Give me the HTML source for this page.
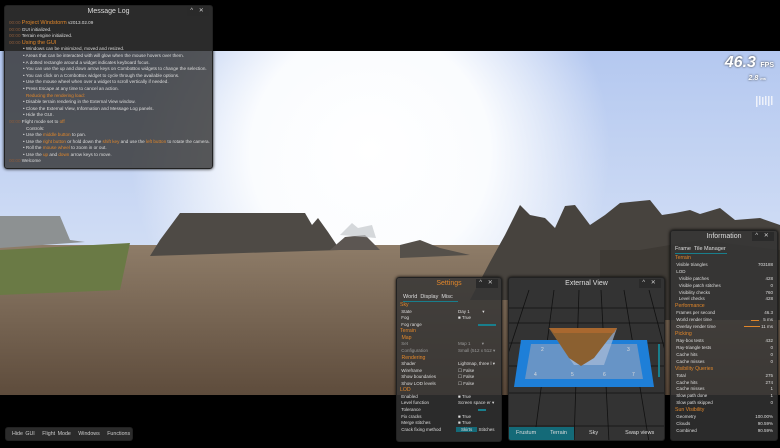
<!DOCTYPE html>
<html><head><meta charset="utf-8"><style>
*{margin:0;padding:0;box-sizing:border-box}
body{width:780px;height:448px;background:#000;overflow:hidden;position:relative;font-family:"Liberation Sans",sans-serif;color:#ddd}
.p{position:absolute;background:rgba(52,52,52,.82);border:1px solid #222;border-radius:3px;box-shadow:0 0 3px #000}
.t{text-align:center;font-size:7px;color:#ddd;height:12px;line-height:12px}
.ctl{position:absolute;right:3px;top:1px;width:22px;height:9px;background:#2a2a2a;font-size:6px;color:#ccc;text-align:center;line-height:9px;letter-spacing:2px}
.o{color:#e0862a}
.ml{font-size:4.6px;line-height:6.6px;white-space:nowrap;padding-left:4px}
.ts{color:#8a5a3a}
.r{display:flex;justify-content:space-between;font-size:4.5px;line-height:6.55px;white-space:nowrap}
.h{font-size:5.2px;color:#e0862a;line-height:6.6px}
.inf .r{line-height:6.85px}
.inf .h{line-height:7.2px}
</style></head><body>
<svg width="780" height="448" style="position:absolute;left:0;top:0">
<defs>
<linearGradient id="sky" x1="0" y1="0" x2="0" y2="1"><stop offset="0" stop-color="#b4c8f0"/><stop offset="1" stop-color="#e6edf8"/></linearGradient>
<radialGradient id="sun" cx="370" cy="150" r="240" gradientUnits="userSpaceOnUse"><stop offset="0" stop-color="#fff"/><stop offset=".5" stop-color="#fdfeff" stop-opacity=".95"/><stop offset="1" stop-color="#fff" stop-opacity="0"/></radialGradient>
<linearGradient id="gr" x1="0" y1="0" x2="0" y2="1"><stop offset="0" stop-color="#8e7c68"/><stop offset="1" stop-color="#5e4c3c"/></linearGradient>
</defs>
<rect x="0" y="51" width="780" height="344" fill="url(#sky)"/>
<rect x="0" y="51" width="780" height="344" fill="url(#sun)"/>
<rect x="0" y="245" width="780" height="150" fill="url(#gr)"/>
<path d="M0 216 L60 216 L70 240 L85 242 L0 248Z" fill="#8d9192"/>
<path d="M0 250 L130 243 L120 290 L0 295Z" fill="#6a7a45"/>
<path d="M160 240 L180 213 L305 213 L312 225 L318 218 L328 232 L340 250 L150 256Z" fill="#4e4a45"/>
<path d="M330 250 L345 237 L365 235 L380 250Z" fill="#5c5652"/>
<path d="M340 235 L352 223 L358 228 L372 225 L376 238Z" fill="#c4c8cc" opacity=".7"/>
<path d="M470 300 L490 262 L505 235 L520 205 L530 215 L545 218 L555 228 L565 206 L575 205 L590 225 L605 215 L620 203 L650 200 L662 215 L675 213 L690 210 L700 214 L720 208 L735 220 L760 218 L780 225 L780 300Z" fill="#47433e"/>
<path d="M600 250 L640 250 L700 240 L780 250 L780 320 L600 320Z" fill="#3e3a35"/>
<path d="M400 245 L420 240 L440 248 L470 255 L400 258Z" fill="#55504a"/>
<rect x="0" y="395" width="780" height="53" fill="#000"/>
<g fill="#f4f6fb" opacity=".9"><rect x="756" y="96" width="1.5" height="11"/><rect x="759" y="96" width="1.5" height="9"/><rect x="762" y="97" width="1.5" height="8"/><rect x="765" y="96" width="1.5" height="9"/><rect x="768" y="96" width="1.5" height="10"/><rect x="771" y="96" width="1.5" height="9"/></g>
</svg>
<div style="position:absolute;right:6px;top:54px;font-size:16px;font-weight:bold;font-style:italic;color:#fff;text-shadow:0 0 2px #333">46.3 <span style="font-size:7px;font-style:normal">FPS</span></div>
<div style="position:absolute;right:14px;top:75px;font-size:7px;font-weight:bold;font-style:italic;color:#fff;text-shadow:0 0 2px #333">2.8 <span style="font-size:4px">ms</span></div>

<div class="p" style="left:4px;top:5px;width:209px;height:164px">
<div class="t">Message Log</div><div class="ctl">^ ✕</div>
<div class="ml" style="margin-top:2px">
<div><span class="ts">00:00</span> <span class="o" style="font-size:5.5px">Project Windstorm</span> v2013.02.09</div>
<div><span class="ts">00:00</span> GUI initialized.</div>
<div><span class="ts">00:00</span> Terrain engine initialized.</div>
<div><span class="ts">00:00</span> <span class="o" style="font-size:5.5px">Using the GUI</span></div>
<div style="padding-left:14px">• Windows can be minimized, moved and resized.</div>
<div style="padding-left:14px">• Areas that can be interacted with will glow when the mouse hovers over them.</div>
<div style="padding-left:14px">• A dotted rectangle around a widget indicates keyboard focus.</div>
<div style="padding-left:14px">• You can use the up and down arrow keys on ComboBox widgets to change the selection.</div>
<div style="padding-left:14px">• You can click on a ComboBox widget to cycle through the available options.</div>
<div style="padding-left:14px">• Use the mouse wheel when over a widget to scroll vertically if needed.</div>
<div style="padding-left:14px">• Press Escape at any time to cancel an action.</div>
<div style="padding-left:17px" class="o">Reducing the rendering load:</div>
<div style="padding-left:14px">• Disable terrain rendering in the External View window.</div>
<div style="padding-left:14px">• Close the External View, Information and Message Log panels.</div>
<div style="padding-left:14px">• Hide the GUI.</div>
<div><span class="ts">00:00</span> Flight mode set to <span class="o">off</span></div>
<div style="padding-left:17px">Controls:</div>
<div style="padding-left:14px">• Use the <span class="o">middle button</span> to pan.</div>
<div style="padding-left:14px">• Use the <span class="o">right button</span> or hold down the <span class="o">shift key</span> and use the <span class="o">left button</span> to rotate the camera.</div>
<div style="padding-left:14px">• Roll the <span class="o">mouse wheel</span> to zoom in or out.</div>
<div style="padding-left:14px">• Use the <span class="o">up</span> and <span class="o">down</span> arrow keys to move.</div>
<div><span class="ts">00:00</span> Welcome</div>
</div></div>

<div class="p" style="left:396px;top:277px;width:106px;height:165px;padding:0 3px">
<div class="t o" style="color:#e0862a">Settings</div><div class="ctl">^ ✕</div>
<div style="font-size:5.5px;margin:4px 0 0 3px;line-height:7px">World&nbsp; Display&nbsp; Misc</div>
<div style="height:1px;width:55px;background:#197e8c;margin-left:3px"></div>
<div class="h">Sky</div>
<div class="r"><span>&nbsp;State</span><span style="width:40px">Day 1 &nbsp;&nbsp;&nbsp;&nbsp;&nbsp;&nbsp;&nbsp;&nbsp;&nbsp;▾</span></div>
<div class="r"><span>&nbsp;Fog</span><span style="width:40px">■ True</span></div>
<div class="r"><span>&nbsp;Fog range</span><span style="width:40px"><span style="display:inline-block;width:18px;height:2px;background:#197e8c;margin-left:20px"></span></span></div>
<div class="h">Terrain</div>
<div class="h">&nbsp;Map</div>
<div class="r" style="color:#999"><span>&nbsp;Set</span><span style="width:40px">Map 1 &nbsp;&nbsp;&nbsp;&nbsp;&nbsp;&nbsp;&nbsp;&nbsp;▾</span></div>
<div class="r" style="color:#999"><span>&nbsp;Configuration</span><span style="width:40px">Small (512 x 512 ▾</span></div>
<div class="h">&nbsp;Rendering</div>
<div class="r"><span>&nbsp;Shader</span><span style="width:40px">Lightmap, three l ▾</span></div>
<div class="r"><span>&nbsp;Wireframe</span><span style="width:40px">☐ False</span></div>
<div class="r"><span>&nbsp;Show boundaries</span><span style="width:40px">☐ False</span></div>
<div class="r"><span>&nbsp;Show LOD levels</span><span style="width:40px">☐ False</span></div>
<div class="h">LOD</div>
<div class="r"><span>&nbsp;Enabled</span><span style="width:40px">■ True</span></div>
<div class="r"><span>&nbsp;Level function</span><span style="width:40px">Screen space er ▾</span></div>
<div class="r"><span>&nbsp;Tolerance</span><span style="width:40px"><span style="display:inline-block;width:8px;height:2px;background:#197e8c;margin-left:20px"></span></span></div>
<div class="r"><span>&nbsp;Fix cracks</span><span style="width:40px">■ True</span></div>
<div class="r"><span>&nbsp;Merge stitches</span><span style="width:40px">■ True</span></div>
<div class="r"><span>&nbsp;Crack fixing method</span><span style="width:42px"><span style="background:#146a78;padding:0 5px">Skirts</span> Stitches</span></div>
</div>

<div class="p" style="left:508px;top:277px;width:157px;height:164px;overflow:hidden;background:#333">
<svg width="157" height="164" style="position:absolute;left:0;top:0">
<g stroke="#111" stroke-width=".8">
<line x1="0" y1="30" x2="157" y2="30"/><line x1="0" y1="45" x2="157" y2="45"/><line x1="0" y1="65" x2="157" y2="65"/><line x1="0" y1="88" x2="157" y2="88"/><line x1="0" y1="115" x2="157" y2="115"/><line x1="0" y1="148" x2="157" y2="148"/>
<line x1="20" y1="12" x2="-30" y2="164"/><line x1="45" y1="12" x2="25" y2="164"/><line x1="70" y1="12" x2="65" y2="164"/><line x1="92" y1="12" x2="100" y2="164"/><line x1="115" y1="12" x2="140" y2="164"/><line x1="140" y1="12" x2="180" y2="164"/>
</g>
<polygon points="12,62 138,62 145,109 5,109" fill="#1e7fd8"/>
<polygon points="22,66 128,66 134,101 16,101" fill="#6f97c4" opacity=".9"/>
<polygon points="40,50 108,50 95,87 65,87" fill="#a9bcd8" opacity=".7"/>
<polygon points="40,50 108,50 85,80 72,88 60,80" fill="#8b6030"/>
<polygon points="40,50 108,50 105,55 45,55" fill="#b06a30" opacity=".8"/>
<g fill="#ddd" font-size="5" font-family="Liberation Sans"><text x="32" y="73">2</text><text x="118" y="73">3</text><text x="25" y="98">4</text><text x="62" y="98">5</text><text x="94" y="98">6</text><text x="123" y="98">7</text></g>
<rect x="149" y="66" width="2" height="33" fill="#197e8c"/>
</svg>
<div class="t" style="position:relative">External View</div><div class="ctl">^ ✕</div>
<div style="position:absolute;left:0;bottom:0;width:157px;height:13px;font-size:5.5px;line-height:13px;display:flex">
<span style="background:#146a78;width:65px;display:flex;justify-content:space-around">Frustum <span>Terrain</span></span>
<span style="margin-left:15px">Sky</span><span style="margin-left:27px">Swap views</span></div>
</div>

<div class="p inf" style="left:670px;top:230px;width:108px;height:211px;padding:0 4px">
<div class="t">Information</div><div class="ctl">^ ✕</div>
<div style="font-size:5.5px;line-height:8px;margin-top:2px">Frame&nbsp; Tile Manager</div>
<div style="height:1px;background:#197e8c;width:52px;margin-bottom:1px"></div>
<div class="h">Terrain</div>
<div class="r"><span>&nbsp;Visible triangles</span><span>703188</span></div>
<div class="r"><span>&nbsp;LOD</span><span></span></div>
<div class="r"><span>&nbsp;&nbsp;&nbsp;Visible patches</span><span>428</span></div>
<div class="r"><span>&nbsp;&nbsp;&nbsp;Visible patch stitches</span><span>0</span></div>
<div class="r"><span>&nbsp;&nbsp;&nbsp;Visibility checks</span><span>760</span></div>
<div class="r"><span>&nbsp;&nbsp;&nbsp;Level checks</span><span>428</span></div>
<div class="h">Performance</div>
<div class="r"><span>&nbsp;Frames per second</span><span>46.3</span></div>
<div class="r"><span>&nbsp;World render time</span><span><span style="display:inline-block;width:8px;height:1px;background:#e0862a;vertical-align:middle"></span>&nbsp;&nbsp; 5 ms</span></div>
<div class="r"><span>&nbsp;Overlay render time</span><span><span style="display:inline-block;width:16px;height:1px;background:#e0862a;vertical-align:middle"></span> 11 ms</span></div>
<div class="h">Picking</div>
<div class="r"><span>&nbsp;Ray-box tests</span><span>432</span></div>
<div class="r"><span>&nbsp;Ray-triangle tests</span><span>0</span></div>
<div class="r"><span>&nbsp;Cache hits</span><span>0</span></div>
<div class="r"><span>&nbsp;Cache misses</span><span>0</span></div>
<div class="h">Visibility Queries</div>
<div class="r"><span>&nbsp;Total</span><span>275</span></div>
<div class="r"><span>&nbsp;Cache hits</span><span>274</span></div>
<div class="r"><span>&nbsp;Cache misses</span><span>1</span></div>
<div class="r"><span>&nbsp;Slow path done</span><span>1</span></div>
<div class="r"><span>&nbsp;Slow path skipped</span><span>0</span></div>
<div class="h">Sun Visibility</div>
<div class="r"><span>&nbsp;Geometry</span><span>100.00%</span></div>
<div class="r"><span>&nbsp;Clouds</span><span>90.59%</span></div>
<div class="r"><span>&nbsp;Combined</span><span>90.59%</span></div>
</div>

<div class="p" style="left:5px;top:427px;width:128px;height:14px;font-size:5.3px;line-height:12px;color:#ccc;padding-left:6px;word-spacing:1px">Hide GUI&nbsp;&nbsp; Flight Mode&nbsp;&nbsp; Windows&nbsp;&nbsp; Functions</div>
</body></html>
